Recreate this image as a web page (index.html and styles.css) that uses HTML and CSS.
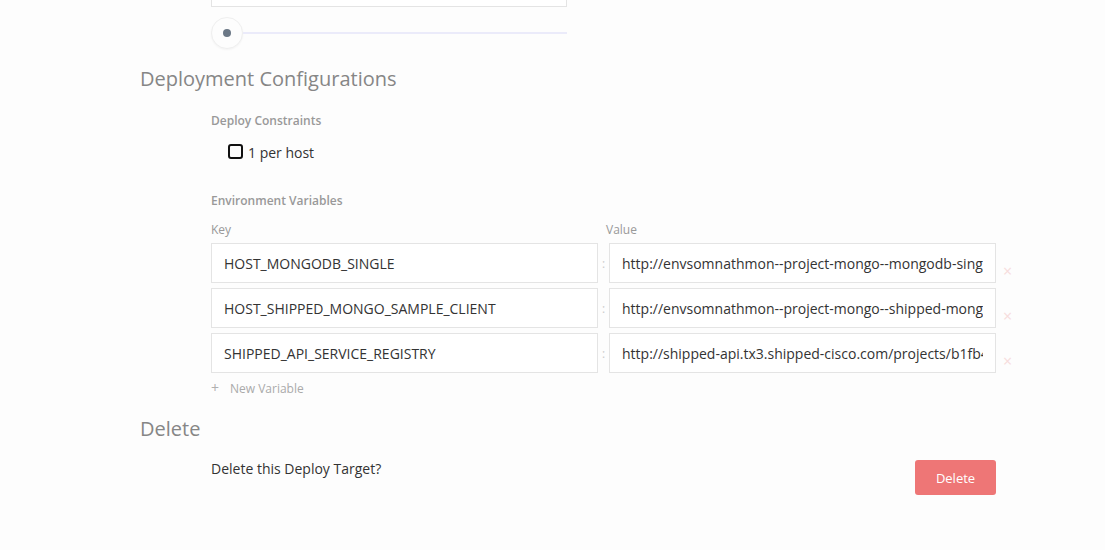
FILE: index.html
```html
<!DOCTYPE html>
<html>
<head>
<meta charset="utf-8">
<link rel="stylesheet" href="styles.css">
</head>
<body>
<div class="page">
  <div class="indent">
    <div class="top-input"></div>
    <div class="slider">
      <div class="thumb"><span class="dot"></span></div>
      <div class="track"></div>
    </div>
  </div>

  <h2 class="section-title first">Deployment Configurations</h2>
  <div class="indent">
    <div class="label label-constraints">Deploy Constraints</div>
    <label class="check-row"><span class="checkbox"></span><span>1 per host</span></label>

    <div class="label label-env">Environment Variables</div>
    <div class="kv-head">
      <span class="col-key">Key</span>
      <span class="col-val">Value</span>
    </div>
    <div class="rows">
      <div class="row">
        <div class="field"><span class="field-text">HOST_MONGODB_SINGLE</span></div>
        <span class="colon">:</span>
        <div class="field"><span class="field-text">http://envsomnathmon--project-mongo--mongodb-sing</span></div>
        <span class="remove">×</span>
      </div>
      <div class="row">
        <div class="field"><span class="field-text">HOST_SHIPPED_MONGO_SAMPLE_CLIENT</span></div>
        <span class="colon">:</span>
        <div class="field"><span class="field-text">http://envsomnathmon--project-mongo--shipped-mong</span></div>
        <span class="remove">×</span>
      </div>
      <div class="row">
        <div class="field"><span class="field-text">SHIPPED_API_SERVICE_REGISTRY</span></div>
        <span class="colon">:</span>
        <div class="field"><span class="field-text">http://shipped-api.tx3.shipped-cisco.com/projects/b1fb4</span></div>
        <span class="remove">×</span>
      </div>
    </div>
    <div class="new-var"><span class="plus">+</span>New Variable</div>
  </div>

  <h2 class="section-title second">Delete</h2>
  <div class="indent">
    <div class="delete-row">
      <span class="delete-text">Delete this Deploy Target?</span>
      <button class="btn-delete">Delete</button>
    </div>
  </div>
</div>
</body>
</html>
```

FILE: styles.css
```css
html, body {
  margin: 0;
  padding: 0;
  background: #fdfdfd;
  font-family: "Open Sans", "Noto Sans", sans-serif;
  color: #333;
}

.page {
  padding-left: 140px;
  width: 870px;
}

.indent {
  margin-left: 71px;
}

.top-input {
  width: 354px;
  height: 40px;
  margin-top: -35px;
  background: #fff;
  border: 1px solid #e4e4e4;
}

.slider {
  width: 356px;
  height: 32px;
  margin-top: 10px;
  display: flex;
  align-items: center;
}

.thumb {
  width: 30px;
  height: 30px;
  border-radius: 50%;
  background: #fdfdfd;
  border: 1px solid #efefef;
  box-shadow: 0 1px 2px rgba(0,0,0,0.04);
  display: flex;
  align-items: center;
  justify-content: center;
  flex: none;
}

.dot {
  width: 8px;
  height: 8px;
  border-radius: 50%;
  background: #6b7886;
}

.track {
  flex: 1;
  height: 2px;
  background: #ebebfa;
}

.section-title {
  margin: 0;
  font-size: 20px;
  line-height: 24px;
  font-weight: 400;
  color: #868686;
}

.section-title.first { margin-top: 18px; }
.section-title.second { margin-top: 20px; }

.label {
  font-size: 12px;
  line-height: 16px;
  font-weight: 600;
  color: #999;
}

.label-constraints { margin-top: 22px; }
.label-env { margin-top: 31px; }

.check-row {
  display: flex;
  align-items: center;
  margin-top: 13px;
  margin-left: 17px;
  height: 20px;
  font-size: 14px;
  color: #333;
}

.checkbox {
  width: 11px;
  height: 11px;
  border: 2.5px solid #111;
  border-radius: 3px;
  margin-right: 5px;
  margin-top: -2px;
  box-sizing: content-box;
}

.kv-head {
  display: flex;
  margin-top: 13px;
  font-size: 12px;
  line-height: 16px;
  color: #999;
}

.col-key { width: 395px; }

.rows {
  margin-top: 5px;
  display: flex;
  flex-direction: column;
  gap: 5px;
}

.row {
  display: flex;
  align-items: center;
}

.field {
  width: 361px;
  height: 38px;
  line-height: 39px;
  padding: 0 12px;
  background: #fff;
  border: 1px solid #e4e4e4;
  font-size: 14px;
  color: #333;
  flex: none;
}

.field-text {
  display: block;
  white-space: nowrap;
  overflow: hidden;
}

.colon {
  width: 11px;
  text-align: center;
  color: #ccc;
  font-size: 12px;
  flex: none;
}

.remove {
  margin-left: 7px;
  margin-top: 16px;
  color: #f7dcdc;
  font-size: 16px;
  line-height: 16px;
}

.new-var {
  margin-top: 7px;
  font-size: 12px;
  line-height: 16px;
  color: #aaa;
}

.plus {
  display: inline-block;
  width: 19px;
  font-size: 14px;
  color: #b0b0b0;
}

.delete-row {
  margin-top: 18px;
  width: 785px;
  display: flex;
  justify-content: space-between;
  align-items: flex-start;
}

.delete-text {
  font-size: 14px;
  line-height: 20px;
  color: #333;
}

.btn-delete {
  margin: 1px 0 0 0;
  width: 81px;
  height: 35px;
  border: none;
  border-radius: 3px;
  background: #ee7676;
  color: #fff;
  font-family: "Open Sans", "Noto Sans", sans-serif;
  font-size: 13px;
  cursor: pointer;
}
```
